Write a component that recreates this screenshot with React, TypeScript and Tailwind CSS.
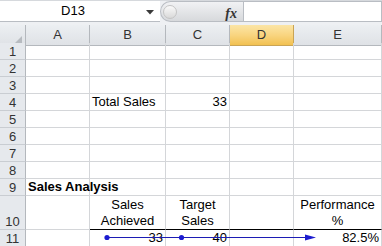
import React from 'react';

type Cell = {
  text?: string[];
  align?: 'left' | 'right' | 'center';
  bold?: boolean;
};

const COLS = ['A', 'B', 'C', 'D', 'E'];

// cell contents keyed by address
const CELLS: Record<string, Cell> = {
  B4: { text: ['Total Sales'], align: 'left' },
  C4: { text: ['33'], align: 'right' },
  A9: { text: ['Sales Analysis'], align: 'left', bold: true },
  B10: { text: ['Sales', 'Achieved'], align: 'center' },
  C10: { text: ['Target', 'Sales'], align: 'center' },
  E10: { text: ['Performance', '%'], align: 'center' },
  B11: { text: ['33'], align: 'right' },
  C11: { text: ['40'], align: 'right' },
  E11: { text: ['82.5%'], align: 'right' },
};

const ROWS = [1, 2, 3, 4, 5, 6, 7, 8, 9, 10, 11];

const alignClass = {
  left: 'justify-start text-left pl-[2px]',
  right: 'justify-end text-right pr-[2px]',
  center: 'justify-center text-center',
};

function FormulaBar() {
  return (
    <div className="h-[25px] flex items-start bg-[#eef0f3] border-t border-[#d6d9dd]">
      {/* name box */}
      <div className="w-[160px] h-[21px] bg-white border-b border-[#b9bdc3] flex items-center relative">
        <span className="w-[146px] text-center text-[13px] text-black">D13</span>
        <svg width="8" height="5" className="absolute left-[146px] top-[9px]">
          <path d="M0 0 H8 L4 4.5 Z" fill="#3a3a3a" />
        </svg>
      </div>
      {/* splitter pill + fx */}
      <div className="w-[83px] h-[21px] rounded-l-full bg-gradient-to-b from-[#f1f2f4] to-[#d7d9dc] border border-r-0 border-[#b9bdc3] flex items-center relative">
        <div className="ml-[2px] w-[14px] h-[14px] rounded-full bg-gradient-to-b from-[#fafafa] to-[#d9d9d9] border border-[#c4c4c4]" />
        <span
          className="absolute right-[6px] top-[1px] text-[14px] font-bold italic text-[#333]"
          style={{ fontFamily: '"Liberation Serif", serif' }}
        >
          fx
        </span>
      </div>
      <div className="flex-1 h-[21px] bg-white border border-[#b9bdc3]" />
    </div>
  );
}

function TraceArrow() {
  // precedent arrow: B11 -> E11, C11 -> E11
  return (
    <svg className="absolute left-0 top-0 pointer-events-none" width="382" height="17">
      <line x1="107" y1="7.5" x2="307" y2="7.5" stroke="#1c1cb4" strokeWidth="1.2" />
      <circle cx="107" cy="7.5" r="2.6" fill="#1c1cd0" />
      <circle cx="181.5" cy="7.5" r="2.6" fill="#1c1cd0" />
      <path d="M305 4.5 L316 7.5 L305 10.5 Z" fill="#1c1cd0" />
    </svg>
  );
}

export default function App() {
  return (
    <div
      className="w-[382px] h-[246px] overflow-hidden bg-white text-black"
      style={{ fontFamily: '"Liberation Sans", Arial, sans-serif' }}
    >
      <FormulaBar />

      {/* column headers */}
      <div className="grid grid-cols-[26px_64px_76px_64px_64px_88px] h-[18px]">
        <div className="bg-gradient-to-b from-[#eceff2] to-[#dfe2e6] border-r border-b border-[#b4b8bd] relative">
          <svg width="7" height="7" className="absolute right-[3px] bottom-[2px]">
            <path d="M7 0 V7 H0 Z" fill="#b7bbc0" />
          </svg>
        </div>
        {COLS.map((c) =>
          c === 'D' ? (
            <div
              key={c}
              className="bg-gradient-to-b from-[#fbe5a6] via-[#f9d580] to-[#f2c150] border-r border-b border-[#c9a455] flex items-center justify-center text-[13px] text-[#333]"
            >
              {c}
            </div>
          ) : (
            <div
              key={c}
              className="bg-gradient-to-b from-[#eceff2] to-[#dfe2e6] border-r border-b border-[#b4b8bd] flex items-center justify-center text-[13px] text-[#333]"
            >
              {c}
            </div>
          )
        )}
      </div>

      {/* rows */}
      {ROWS.map((r) => (
        <div
          key={r}
          className={`grid grid-cols-[26px_64px_76px_64px_64px_88px] relative ${r === 10 ? 'h-[34px]' : 'h-[17px]'}`}
        >
          <div className="bg-[#e6e9ed] border-r border-b border-r-[#b4b8bd] border-b-[#c9cdd2] flex items-end justify-center text-[13px] leading-[15px] text-[#333]">
            {r}
          </div>
          {COLS.map((c) => {
            const cell = CELLS[c + r];
            const underline = r === 10 && c !== 'A';
            return (
              <div
                key={c}
                className={`border-r border-b border-r-[#d4d6d9] ${underline ? 'border-b-black' : 'border-b-[#d4d6d9]'} flex items-end ${
                  cell ? alignClass[cell.align ?? 'left'] : ''
                }`}
              >
                {cell && (
                  <div
                    className={`text-[13px] leading-[16px] whitespace-nowrap ${cell.bold ? 'font-bold' : ''} ${
                      cell.align === 'right' ? 'relative' : ''
                    }`}
                  >
                    {cell.text!.map((t) => (
                      <div key={t}>{t}</div>
                    ))}
                  </div>
                )}
              </div>
            );
          })}
          {r === 11 && <TraceArrow />}
        </div>
      ))}
    </div>
  );
}
